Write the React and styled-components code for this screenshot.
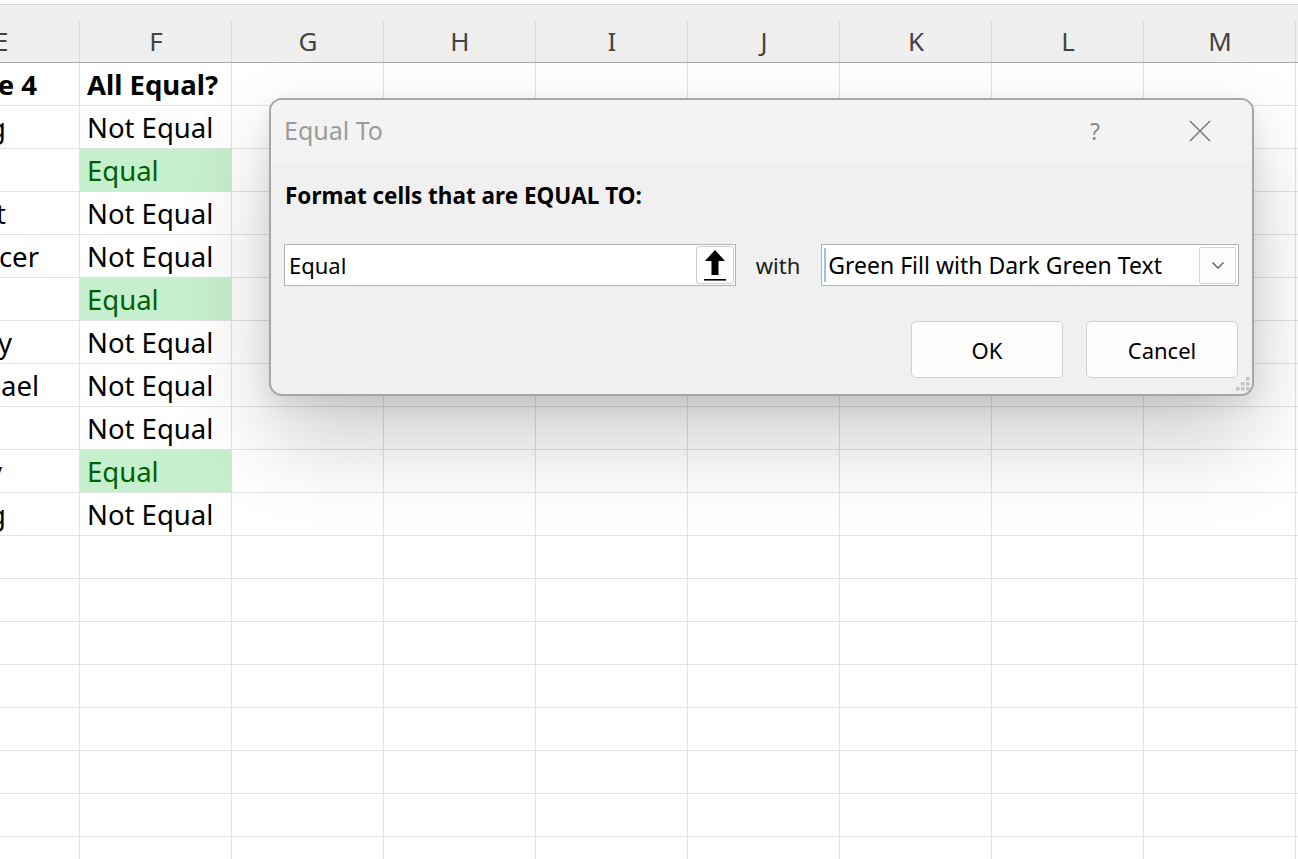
import React from "react"
import styled, { createGlobalStyle } from "styled-components"

const GlobalStyle = createGlobalStyle`
  body {
    margin: 0;
    background: #ffffff;
    font-family: "Noto Sans", "Open Sans", sans-serif;
    overflow: hidden;
  }
`

const columns = ["E", "F", "G", "H", "I", "J", "K", "L", "M", "N"]
const widths = [80, 152, 152, 152, 152, 152, 152, 152, 152, 152]

// column E is scrolled off to the left, only the tail of each name shows
const rows = [
  { name: "Value 4", end: 42, result: "All Equal?", head: true },
  { name: "Doug", end: 73, result: "Not Equal" },
  { name: "", result: "Equal", equal: true },
  { name: "Kurt", end: 73, result: "Not Equal" },
  { name: "Spencer", end: 40, result: "Not Equal" },
  { name: "", result: "Equal", equal: true },
  { name: "Andy", end: 67, result: "Not Equal" },
  { name: "Michael", end: 40, result: "Not Equal" },
  { name: "", result: "Not Equal" },
  { name: "Andy", end: 77, result: "Equal", equal: true },
  { name: "Doug", end: 73, result: "Not Equal" },
]

const Page = styled.div`
  position: relative;
  width: 1298px;
  height: 859px;
  overflow: hidden;
  padding-top: 4px;
  box-sizing: border-box;
`

const HeaderRow = styled.div`
  display: flex;
  height: 59px;
  background: #efefef;
  border-top: 1px solid #d6d6d6;
  border-bottom: 1px solid #ababab;
  box-sizing: border-box;
`

const HeaderCell = styled.div`
  position: relative;
  flex: 0 0 ${p => p.$w}px;
  display: flex;
  align-items: flex-end;
  justify-content: ${p => (p.$first ? "flex-start" : "center")};
  padding-bottom: 6px;
  box-sizing: border-box;
  font-size: 26px;
  line-height: 30px;
  color: #444444;
  overflow: hidden;

  &::after {
    content: "";
    position: absolute;
    right: 0;
    top: 16px;
    bottom: 0;
    width: 1px;
    background: #d9d9d9;
  }
`

const HeaderLetter = styled.span`
  margin-left: ${p => (p.$first ? "-6px" : "0")};
`

const Row = styled.div`
  display: flex;
  height: 43px;
`

const Cell = styled.div`
  flex: 0 0 ${p => p.$w}px;
  height: 43px;
  box-sizing: border-box;
  border-right: 1px solid #e1e1e1;
  border-bottom: 1px solid #e1e1e1;
  background: ${p => (p.$equal ? "#c6efce" : "#ffffff")};
  color: ${p => (p.$equal ? "#006100" : "#000000")};
  font-size: 27.5px;
  font-weight: ${p => (p.$bold ? 700 : 400)};
  display: flex;
  align-items: center;
  padding-left: 7px;
  white-space: nowrap;
  overflow: hidden;
`

const TailCell = styled(Cell)`
  justify-content: flex-end;
  padding-left: 0;
`

const Tail = styled.span`
  flex: 0 0 auto;
`

const Dialog = styled.div`
  position: absolute;
  left: 269px;
  top: 98px;
  width: 985px;
  height: 298px;
  box-sizing: border-box;
  border: 2px solid #a6a6a6;
  border-radius: 13px;
  background: #f0f0f0;
  box-shadow: 0 44px 90px rgba(0, 0, 0, 0.2), 0 8px 24px rgba(0, 0, 0, 0.08);
  display: flex;
  flex-direction: column;
  overflow: hidden;
`

const TitleBar = styled.div`
  height: 62px;
  flex: 0 0 62px;
  background: #f3f3f3;
  display: flex;
  align-items: center;
  padding-left: 13px;
`

const Title = styled.div`
  flex: 1;
  font-size: 25px;
  color: #9b9b9b;
  padding-bottom: 2px;
`

const HelpMark = styled.div`
  width: 30px;
  text-align: center;
  font-size: 23px;
  color: #8a8a8a;
  margin-right: 78px;
`

const CloseMark = styled.div`
  width: 24px;
  height: 24px;
  margin-right: 40px;
  display: flex;
  align-items: center;
  justify-content: center;
`

const Body = styled.div`
  flex: 1;
  position: relative;
  padding: 18px 13px 0 13px;
  display: flex;
  flex-direction: column;
`

const Prompt = styled.div`
  font-size: 22.5px;
  font-weight: 700;
  color: #000000;
  margin-left: 1px;
`

const FieldRow = styled.div`
  display: flex;
  align-items: center;
  margin-top: 33px;
  height: 42px;
`

const TextBox = styled.div`
  width: 452px;
  height: 42px;
  box-sizing: border-box;
  border: 1px solid #b2b2b2;
  background: #ffffff;
  display: flex;
  align-items: center;
  padding: 0 1px 0 4px;
  font-size: 22px;
  color: #000000;
`

const BoxText = styled.span`
  flex: 1;
`

const PickButton = styled.div`
  width: 38px;
  height: 38px;
  box-sizing: border-box;
  border: 1px solid #cfcfcf;
  border-radius: 3px;
  background: #fdfdfd;
  display: flex;
  align-items: center;
  justify-content: center;
`

const WithLabel = styled.div`
  font-size: 22px;
  color: #1a1a1a;
  margin: 0 21px 0 20px;
`

const Combo = styled.div`
  width: 418px;
  height: 42px;
  box-sizing: border-box;
  border: 1px solid #b2b2b2;
  background: #ffffff;
  display: flex;
  align-items: center;
  padding: 0 2px 0 2px;
  font-size: 23px;
  color: #000000;
`

const Caret = styled.span`
  width: 2px;
  height: 34px;
  background: #93c5ef;
  margin-right: 2px;
`

const ComboText = styled.span`
  flex: 1;
  white-space: nowrap;
`

const ComboArrow = styled.div`
  width: 37px;
  height: 37px;
  box-sizing: border-box;
  border: 1px solid #d4d4d4;
  border-radius: 2px;
  background: #fdfdfd;
  display: flex;
  align-items: center;
  justify-content: center;
`

const ButtonRow = styled.div`
  display: flex;
  justify-content: flex-end;
  gap: 23px;
  margin-top: 35px;
  padding-right: 1px;
`

const Button = styled.div`
  width: 152px;
  height: 57px;
  box-sizing: border-box;
  border: 1px solid #d0d0d0;
  border-radius: 5px;
  background: #fdfdfd;
  display: flex;
  align-items: center;
  justify-content: center;
  font-size: 22px;
  color: #000000;
`

const Grip = styled.svg`
  position: absolute;
  right: 2px;
  bottom: 3px;
`

const UpArrow = () => (
  <svg width="26" height="34" viewBox="0 0 26 34">
    <path d="M13 2 L23 13 L16.5 13 L16.5 27 L9.5 27 L9.5 13 L3 13 Z" fill="#000" />
    <rect x="2" y="31" width="22" height="1.6" fill="#000" />
  </svg>
)

const Chevron = () => (
  <svg width="14" height="9" viewBox="0 0 14 9">
    <path d="M1.5 1.5 L7 7 L12.5 1.5" fill="none" stroke="#555" strokeWidth="1.3" />
  </svg>
)

const CloseIcon = () => (
  <svg width="22" height="22" viewBox="0 0 22 22">
    <path d="M1 1 L21 21 M21 1 L1 21" stroke="#7f7f7f" strokeWidth="1.6" />
  </svg>
)

const gripDots = [
  [10, 0],
  [5, 5],
  [10, 5],
  [0, 10],
  [5, 10],
  [10, 10],
]

const App = () => (
  <Page>
    <GlobalStyle />
    <HeaderRow>
      {columns.map((c, i) => (
        <HeaderCell key={c} $w={widths[i]} $first={i === 0}>
          <HeaderLetter $first={i === 0}>{c}</HeaderLetter>
        </HeaderCell>
      ))}
    </HeaderRow>

    {Array.from({ length: 19 }).map((_, r) => {
      const row = rows[r] || { name: "", result: "" }
      return (
        <Row key={r}>
          <TailCell $w={widths[0]} $bold={row.head}>
            <Tail style={{ marginRight: row.end || 0 }}>{row.name}</Tail>
          </TailCell>
          <Cell $w={widths[1]} $equal={row.equal} $bold={row.head}>
            {row.result}
          </Cell>
          {widths.slice(2).map((w, i) => (
            <Cell key={i} $w={w} />
          ))}
        </Row>
      )
    })}

    <Dialog>
      <TitleBar>
        <Title>Equal To</Title>
        <HelpMark>?</HelpMark>
        <CloseMark>
          <CloseIcon />
        </CloseMark>
      </TitleBar>
      <Body>
        <Prompt>Format cells that are EQUAL TO:</Prompt>
        <FieldRow>
          <TextBox>
            <BoxText>Equal</BoxText>
            <PickButton>
              <UpArrow />
            </PickButton>
          </TextBox>
          <WithLabel>with</WithLabel>
          <Combo>
            <Caret />
            <ComboText>Green Fill with Dark Green Text</ComboText>
            <ComboArrow>
              <Chevron />
            </ComboArrow>
          </Combo>
        </FieldRow>
        <ButtonRow>
          <Button>OK</Button>
          <Button>Cancel</Button>
        </ButtonRow>
        <Grip width="14" height="14" viewBox="0 0 14 14">
          {gripDots.map(([x, y], i) => (
            <rect key={i} x={x} y={y} width="3.5" height="3.5" fill="#c4c4c4" />
          ))}
        </Grip>
      </Body>
    </Dialog>
  </Page>
)

export default App
